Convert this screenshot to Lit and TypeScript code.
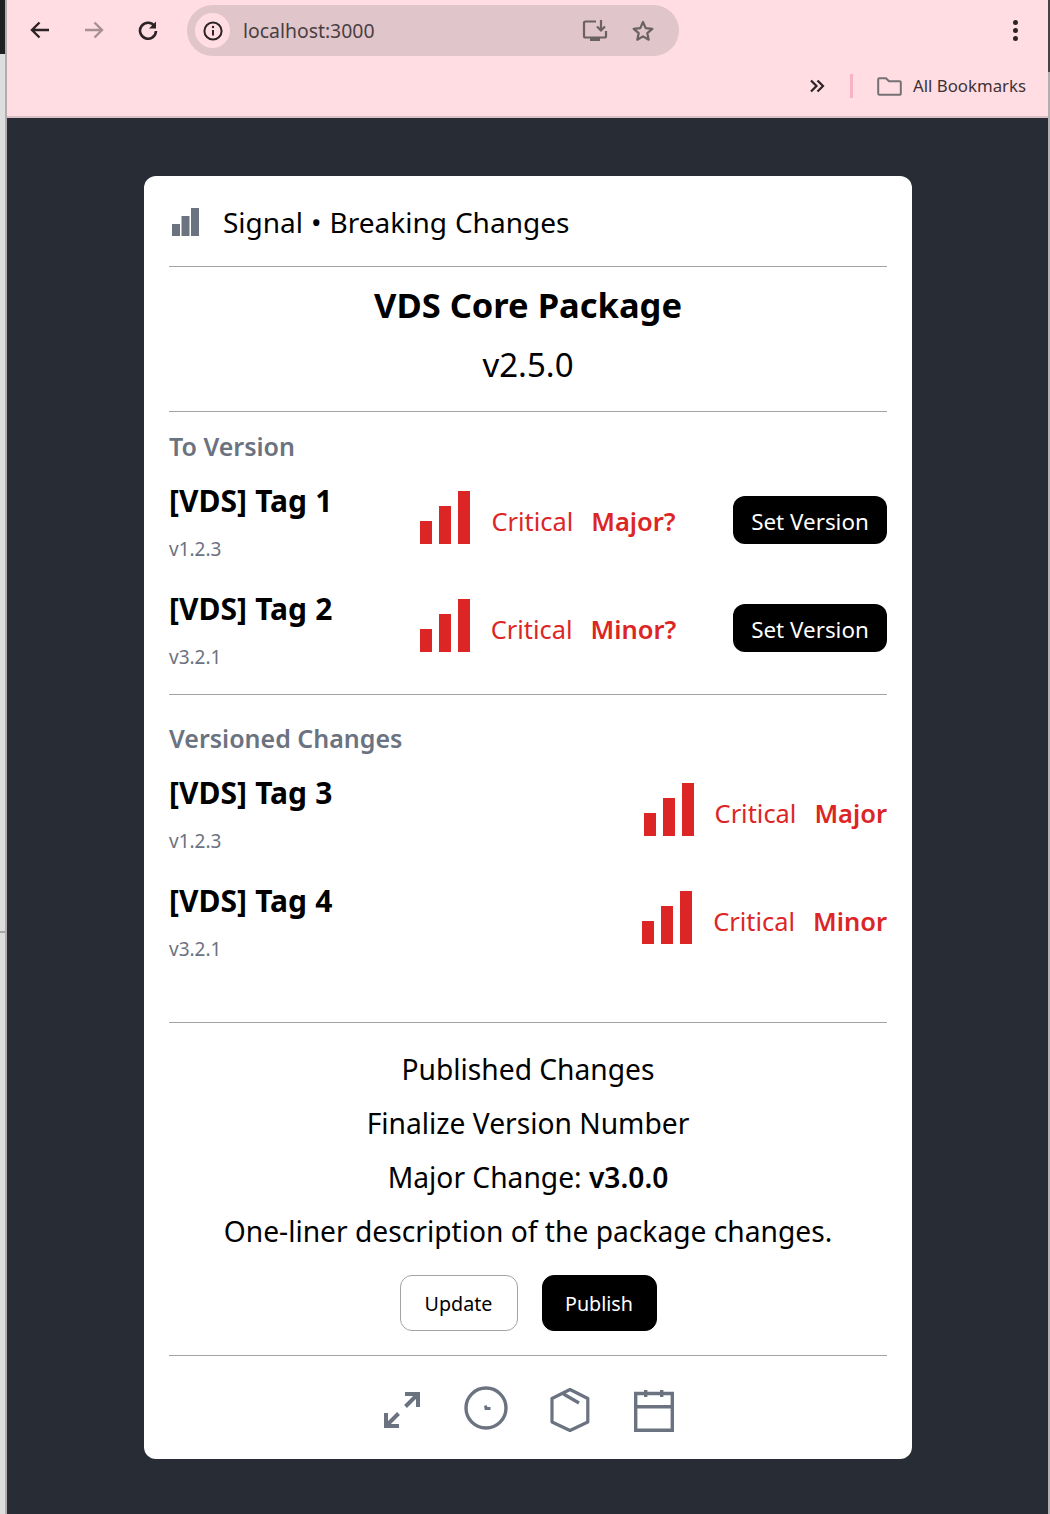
import { css, html, LitElement, svg } from 'lit';
import { customElement } from 'lit/decorators.js';

const pendingTags = [
  { name: '[VDS] Tag 1', version: 'v1.2.3', change: 'Major?' },
  { name: '[VDS] Tag 2', version: 'v3.2.1', change: 'Minor?' },
];

const versionedTags = [
  { name: '[VDS] Tag 3', version: 'v1.2.3', change: 'Major' },
  { name: '[VDS] Tag 4', version: 'v3.2.1', change: 'Minor' },
];

const bars = () => html`
  <svg viewBox="0 0 50 53" aria-hidden="true">
    <rect x="0" y="30" width="12" height="23"></rect>
    <rect x="19" y="15" width="12" height="38"></rect>
    <rect x="38" y="0" width="12" height="53"></rect>
  </svg>
`;

const icon = (w: number, h: number, body: unknown) => html`
  <svg width=${w} height=${h} viewBox="0 0 ${w} ${h}" fill="none" stroke="currentColor" aria-hidden="true">${body}</svg>
`;

@customElement('app-root')
export class AppRoot extends LitElement {
  static override styles = css`
    :host {
      display: block;
      font-family: 'Noto Sans', 'Open Sans', sans-serif;
    }

    .window {
      display: flex;
      width: 1050px;
      height: 1514px;
      background: #282c34;
      overflow: hidden;
    }

    .edge {
      position: relative;
      flex: none;
      box-sizing: border-box;
    }

    .edge.left {
      width: 7px;
      background: #dedede;
      border-right: 2px solid #b3abae;
    }

    .edge.right {
      width: 2px;
      background: #b0b0b0;
    }

    .edge::before {
      content: '';
      display: block;
      height: 54px;
      background: #202020;
    }

    .edge.right::before {
      height: 72px;
      background: #444;
    }

    .edge.left::after {
      content: '';
      position: absolute;
      left: 0;
      right: 0;
      top: 931px;
      height: 2px;
      background: #a8a8a8;
    }

    main {
      flex: 1;
      min-width: 0;
    }

    .chrome {
      height: 116px;
      background: #ffdde3;
      border-bottom: 2px solid #d9bfc5;
      color: #2b2325;
    }

    .toolbar {
      display: flex;
      height: 61px;
      padding-left: 6px;
    }

    .nav {
      display: flex;
      align-items: center;
      justify-content: center;
      width: 54px;
      height: 60px;
    }

    .nav.off {
      color: #a88f94;
    }

    .omnibox {
      display: flex;
      align-items: center;
      width: 492px;
      height: 51px;
      box-sizing: border-box;
      margin: 5px 0 0 12px;
      padding: 0 24px 0 8px;
      border-radius: 26px;
      background: #e0c5ca;
    }

    .chip {
      display: flex;
      align-items: center;
      justify-content: center;
      width: 35px;
      height: 35px;
      border-radius: 50%;
      background: #ffdde3;
    }

    .url {
      flex: 1;
      margin-left: 13px;
      font-size: 19.4px;
      color: #4a3f42;
    }

    .omni-actions {
      display: flex;
      align-items: center;
      gap: 23px;
      color: #6a6163;
    }

    .kebab {
      display: flex;
      flex-direction: column;
      gap: 3px;
      margin: 20px 0 0 334px;
    }

    .kebab i {
      width: 5px;
      height: 5px;
      border-radius: 50%;
      background: #2b2325;
    }

    .bookmarks {
      display: flex;
      align-items: center;
      justify-content: flex-end;
      height: 50px;
      padding-right: 22px;
    }

    .divider {
      width: 3px;
      height: 24px;
      margin: 0 24px 0 25px;
      background: #f7b3c2;
    }

    .folder {
      display: flex;
      color: #757074;
    }

    .bookmarks .label {
      margin: -2px 0 0 11px;
      font-size: 16.8px;
      color: #3c3235;
    }

    .page {
      padding: 58px 136px 55px 137px;
    }

    .card {
      width: 768px;
      box-sizing: border-box;
      padding: 0 25px;
      border-radius: 12px;
      background: #fff;
      color: #000;
    }

    .card-head {
      display: flex;
      align-items: center;
      height: 90px;
      box-sizing: border-box;
      padding: 2px 0 0 3px;
      font-size: 28px;
      word-spacing: 0.7px;
    }

    .card-head svg {
      width: 27px;
      height: 28px;
      margin-right: 24px;
      fill: #6b7280;
    }

    hr {
      height: 1px;
      margin: 0;
      border: none;
      background: #a3a3a3;
    }

    .package {
      padding: 8px 0 16px;
      text-align: center;
    }

    .package h1 {
      margin: 0;
      font-size: 34.5px;
      line-height: 60px;
      font-weight: 700;
    }

    .package p {
      margin: 0;
      font-size: 33px;
      line-height: 60px;
    }

    .group {
      padding: 7px 0 5px;
    }

    .group.versioned {
      padding: 16px 0 41px;
    }

    h2 {
      margin: 0;
      font-size: 25px;
      line-height: 54px;
      font-weight: 600;
      color: #6b7280;
    }

    .row {
      display: grid;
      grid-template-columns: 194px 1fr auto;
      align-items: start;
      height: 108px;
    }

    .versioned .row {
      grid-template-columns: auto 1fr;
    }

    .tag-name {
      padding-top: 1px;
      font-size: 30px;
      line-height: 54px;
      font-weight: 700;
      word-spacing: 0.5px;
    }

    .tag-version {
      margin-top: -6px;
      font-size: 19px;
      line-height: 54px;
      color: #6b7280;
    }

    .signal {
      display: flex;
      align-items: flex-start;
      justify-self: center;
      margin-top: 18px;
      font-size: 25.4px;
      line-height: 54px;
      color: #dc2626;
    }

    .versioned .signal {
      justify-self: end;
    }

    .signal svg {
      width: 50px;
      height: 53px;
      margin-right: 21px;
      fill: #dc2626;
    }

    .signal span,
    .signal b {
      margin-top: 3px;
    }

    .signal b {
      margin-left: 18px;
      font-size: 25.5px;
      font-weight: 600;
    }

    .set-version {
      width: 154px;
      height: 48px;
      margin-top: 23px;
      padding: 2px 0 0;
      border: none;
      border-radius: 12px;
      background: #000;
      color: #fff;
      font: inherit;
      font-size: 22.4px;
    }

    .summary {
      padding: 19px 0 24px;
      text-align: center;
      font-size: 28.2px;
      line-height: 54px;
    }

    .summary b {
      font-weight: 600;
    }

    .actions {
      display: flex;
      justify-content: center;
      gap: 24px;
      margin-top: 17px;
    }

    .actions button {
      width: 118px;
      height: 56px;
      padding: 2px 0 0;
      border: 1px solid #a3a3a3;
      border-radius: 12px;
      background: #fff;
      color: #000;
      font: inherit;
      font-size: 19.7px;
      line-height: 1;
    }

    .actions button.primary {
      width: 115px;
      border-color: #000;
      background: #000;
      color: #fff;
    }

    .tools {
      display: flex;
      justify-content: center;
      align-items: flex-start;
      gap: 43px;
      height: 103px;
      box-sizing: border-box;
      padding: 28px 0 0 2px;
      color: #6b7280;
    }

    .tools svg {
      overflow: visible;
    }
  `;

  private _renderRow(tag: { name: string; version: string; change: string }, action: boolean) {
    return html`
      <div class="row">
        <div>
          <div class="tag-name">${tag.name}</div>
          <div class="tag-version">${tag.version}</div>
        </div>
        <div class="signal">
          ${bars()}
          <span>Critical</span>
          <b>${tag.change}</b>
        </div>
        ${action ? html`<button class="set-version">Set Version</button>` : ''}
      </div>
    `;
  }

  private _renderChrome() {
    return html`
      <div class="chrome">
        <div class="toolbar">
          <div class="nav">
            ${icon(22, 22, svg`<path d="M20 11H3M10.5 3.5 3 11l7.5 7.5" stroke-width="2.4"></path>`)}
          </div>
          <div class="nav off">
            ${icon(22, 22, svg`<path d="M2 11h17M11.5 3.5 19 11l-7.5 7.5" stroke-width="2.4"></path>`)}
          </div>
          <div class="nav">
            ${icon(22, 22, svg`
              <path d="M17.6 7.2A8 8 0 1 0 19 12" stroke-width="2.6"></path>
              <path d="M19 2.5v7h-7z" fill="currentColor" stroke="none"></path>
            `)}
          </div>
          <div class="omnibox">
            <div class="chip">
              ${icon(20, 20, svg`
                <circle cx="10" cy="10" r="8.6" stroke-width="2"></circle>
                <path d="M10 9v5.5" stroke-width="2"></path>
                <circle cx="10" cy="6" r="1.2" fill="currentColor" stroke="none"></circle>
              `)}
            </div>
            <span class="url">localhost:3000</span>
            <div class="omni-actions">
              ${icon(26, 24, svg`
                <path d="M14 2.5H3.5A1.500 1.500 0 0 0 2 4V17a1.500 1.500 0 0 0 1.500 1.500h19A1.500 1.500 0 0 0 24 17v-5" stroke-width="2.200"></path>
                <path d="M19 1v10M15 7.500l4 4 4-4" stroke-width="2.200"></path>
                <path d="M8 18.500h10v3.500H8z" fill="currentColor" stroke="none"></path>
              `)}
              ${icon(24, 24, svg`<path d="m12 3 2.700 6.100 6.600.7-5 4.400 1.400 6.500L12 17.400l-5.700 3.300 1.400-6.500-5-4.400 6.600-.7z" stroke-width="2.200" stroke-linejoin="round"></path>`)}
            </div>
          </div>
          <div class="kebab"><i></i><i></i><i></i></div>
        </div>
        <div class="bookmarks">
          ${icon(16, 14, svg`<path d="m2 1.500 5.500 5.500L2 12.500M8.500 1.500 14 7l-5.500 5.500" stroke-width="2.200"></path>`)}
          <div class="divider"></div>
          <span class="folder">
            ${icon(25, 19, svg`<path d="M2.500 1.200h6.500l3 3h10.500a1.300 1.300 0 0 1 1.300 1.300v11a1.300 1.300 0 0 1-1.300 1.300H2.500a1.300 1.300 0 0 1-1.300-1.300V2.500a1.300 1.300 0 0 1 1.300-1.300z" stroke-width="2"></path>`)}
          </span>
          <span class="label">All Bookmarks</span>
        </div>
      </div>
    `;
  }

  private _renderTools() {
    return html`
      <div class="tools">
        ${icon(37, 50, svg`
          <path d="M21 10H34V23M33 11 21.500 22.500M2 29V42H15M3 41 14.500 29.500" stroke-width="4"></path>
        `)}
        ${icon(43, 50, svg`
          <circle cx="22" cy="24" r="20" stroke-width="3.400"></circle>
          <path d="M21.500 21.500 22 24.500h4.500" stroke-width="3"></path>
        `)}
        ${icon(40, 50, svg`
          <path d="M20 5.500 37.800 14.500V38L20 46.500 2 38V14.500zM13.500 10 29 19" stroke-width="3.200" stroke-linejoin="round"></path>
        `)}
        ${icon(41, 50, svg`
          <path d="M2.700 9.500H39.300V46.300H2.700zM2.700 22.700H39.300" stroke-width="3.400"></path>
          <path d="M12.700 6v7M28.700 6v7" stroke-width="3.400"></path>
        `)}
      </div>
    `;
  }

  protected override render() {
    return html`
      <div class="window">
        <div class="edge left"></div>
        <main>
          ${this._renderChrome()}
          <div class="page">
            <section class="card">
              <header class="card-head">
                <svg viewBox="0 0 27 28" aria-hidden="true">
                  <rect x="0" y="16" width="8" height="12"></rect>
                  <rect x="9.500" y="8" width="8" height="20"></rect>
                  <rect x="19" y="0" width="8" height="28"></rect>
                </svg>
                Signal • Breaking Changes
              </header>
              <hr />
              <div class="package">
                <h1>VDS Core Package</h1>
                <p>v2.5.0</p>
              </div>
              <hr />
              <div class="group">
                <h2>To Version</h2>
                ${pendingTags.map((tag) => this._renderRow(tag, true))}
              </div>
              <hr />
              <div class="group versioned">
                <h2>Versioned Changes</h2>
                ${versionedTags.map((tag) => this._renderRow(tag, false))}
              </div>
              <hr />
              <div class="summary">
                <div>Published Changes</div>
                <div>Finalize Version Number</div>
                <div>Major Change: <b>v3.0.0</b></div>
                <div>One-liner description of the package changes.</div>
                <div class="actions">
                  <button>Update</button>
                  <button class="primary">Publish</button>
                </div>
              </div>
              <hr />
              ${this._renderTools()}
            </section>
          </div>
        </main>
        <div class="edge right"></div>
      </div>
    `;
  }
}
